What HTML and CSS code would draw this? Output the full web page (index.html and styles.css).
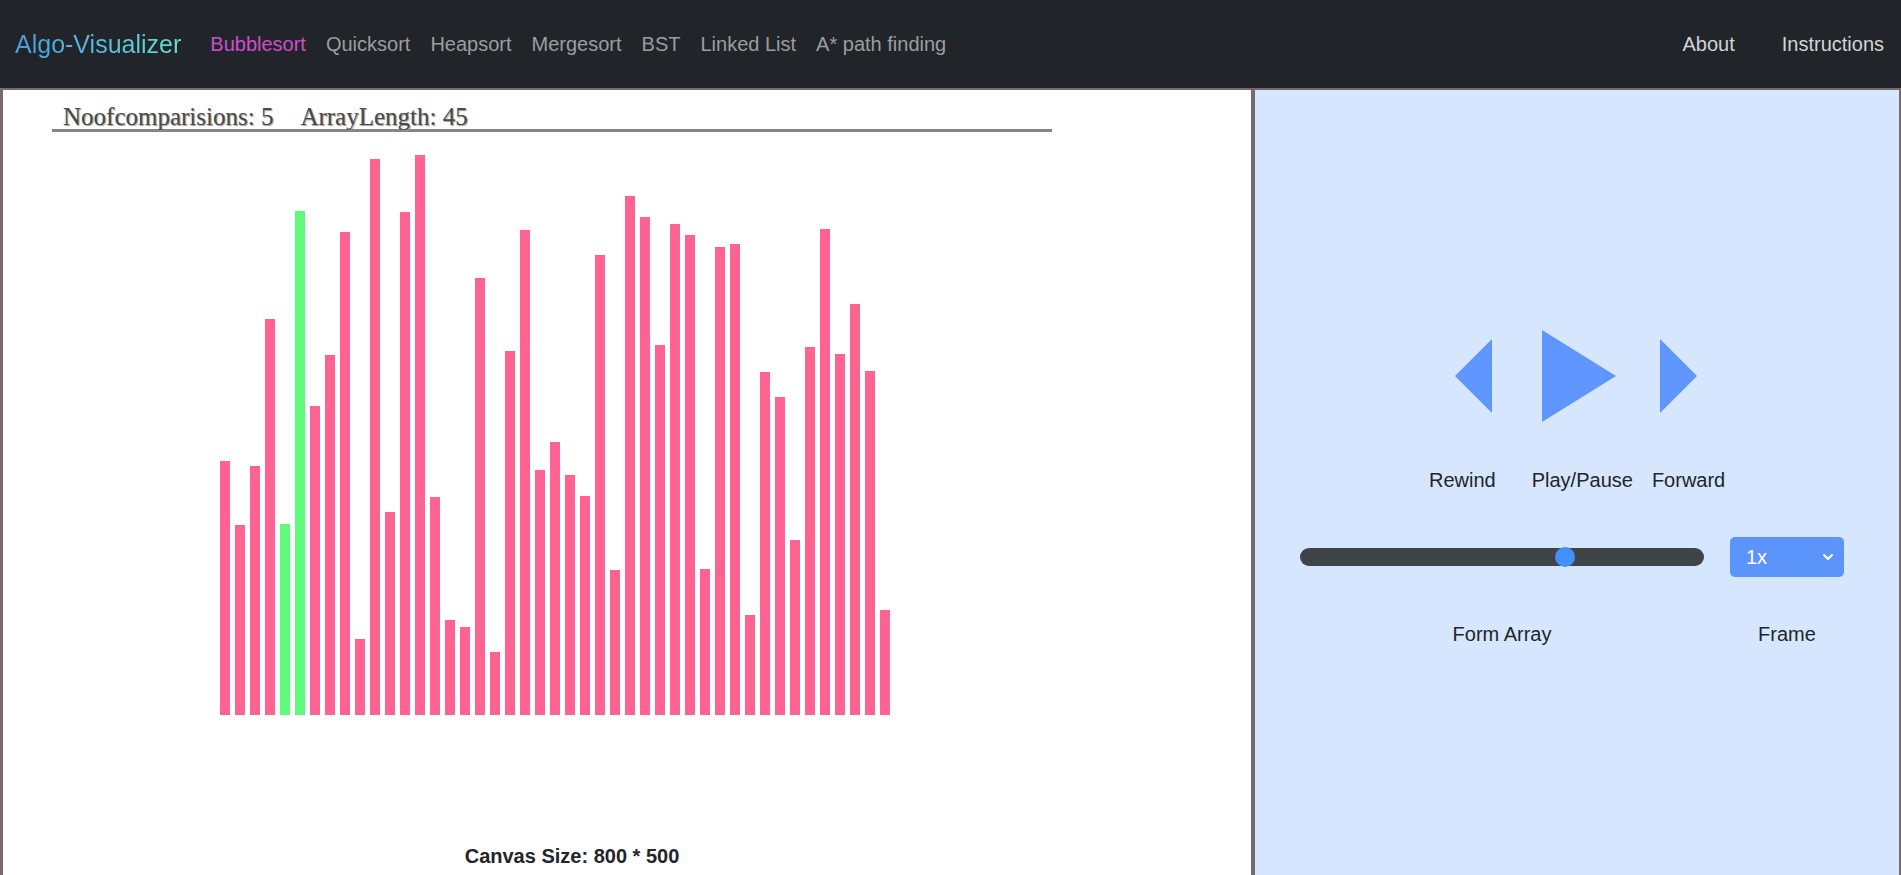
FILE: index.html
```html
<!DOCTYPE html>
<html lang="en">
<head>
<meta charset="utf-8">
<title>Algo-Visualizer</title>
<link rel="stylesheet" href="styles.css">
</head>
<body>
<nav class="navbar">
  <a class="brand" href="#">Algo-Visualizer</a>
  <ul class="nav-links">
    <li><a class="nav-link active" href="#">Bubblesort</a></li>
    <li><a class="nav-link" href="#">Quicksort</a></li>
    <li><a class="nav-link" href="#">Heapsort</a></li>
    <li><a class="nav-link" href="#">Mergesort</a></li>
    <li><a class="nav-link" href="#">BST</a></li>
    <li><a class="nav-link" href="#">Linked List</a></li>
    <li><a class="nav-link" href="#">A* path finding</a></li>
  </ul>
  <ul class="nav-right">
    <li><a class="nav-link-light" href="#">About</a></li>
    <li><a class="nav-link-light" href="#">Instructions</a></li>
  </ul>
</nav>
<main class="main">
  <section class="canvas-panel">
    <div class="stats">
      <span>Noofcomparisions: 5</span>
      <span>ArrayLength: 45</span>
    </div>
    <div class="bars">
      <div class="bar" style="height:254px"></div>
      <div class="bar" style="height:190px"></div>
      <div class="bar" style="height:249px"></div>
      <div class="bar" style="height:396px"></div>
      <div class="bar bar-active" style="height:191px"></div>
      <div class="bar bar-active" style="height:504px"></div>
      <div class="bar" style="height:309px"></div>
      <div class="bar" style="height:360px"></div>
      <div class="bar" style="height:483px"></div>
      <div class="bar" style="height:76px"></div>
      <div class="bar" style="height:556px"></div>
      <div class="bar" style="height:203px"></div>
      <div class="bar" style="height:503px"></div>
      <div class="bar" style="height:560px"></div>
      <div class="bar" style="height:218px"></div>
      <div class="bar" style="height:95px"></div>
      <div class="bar" style="height:88px"></div>
      <div class="bar" style="height:437px"></div>
      <div class="bar" style="height:63px"></div>
      <div class="bar" style="height:364px"></div>
      <div class="bar" style="height:485px"></div>
      <div class="bar" style="height:245px"></div>
      <div class="bar" style="height:273px"></div>
      <div class="bar" style="height:240px"></div>
      <div class="bar" style="height:219px"></div>
      <div class="bar" style="height:460px"></div>
      <div class="bar" style="height:145px"></div>
      <div class="bar" style="height:519px"></div>
      <div class="bar" style="height:498px"></div>
      <div class="bar" style="height:370px"></div>
      <div class="bar" style="height:491px"></div>
      <div class="bar" style="height:480px"></div>
      <div class="bar" style="height:146px"></div>
      <div class="bar" style="height:468px"></div>
      <div class="bar" style="height:471px"></div>
      <div class="bar" style="height:100px"></div>
      <div class="bar" style="height:343px"></div>
      <div class="bar" style="height:318px"></div>
      <div class="bar" style="height:175px"></div>
      <div class="bar" style="height:368px"></div>
      <div class="bar" style="height:486px"></div>
      <div class="bar" style="height:361px"></div>
      <div class="bar" style="height:411px"></div>
      <div class="bar" style="height:344px"></div>
      <div class="bar" style="height:105px"></div>
    </div>
    <div class="caption">Canvas Size: 800 * 500</div>
  </section>
  <aside class="control-panel">
    <div class="transport">
      <button class="tbtn tbtn-rewind" aria-label="Rewind">
        <svg width="37" height="74" viewBox="0 0 37 74"><polygon points="37,0 37,74 0,37" fill="#5e96fd"/></svg>
      </button>
      <button class="tbtn tbtn-play" aria-label="Play/Pause">
        <svg width="74" height="92" viewBox="0 0 74 92"><polygon points="0,0 74,46 0,92" fill="#5e96fd"/></svg>
      </button>
      <button class="tbtn tbtn-forward" aria-label="Forward">
        <svg width="37" height="74" viewBox="0 0 37 74"><polygon points="0,0 37,37 0,74" fill="#5e96fd"/></svg>
      </button>
    </div>
    <div class="transport-labels">
      <span class="lbl lbl-rewind">Rewind</span>
      <span class="lbl lbl-play">Play/Pause</span>
      <span class="lbl lbl-forward">Forward</span>
    </div>
    <div class="settings">
      <div class="track" role="slider" aria-valuemin="0" aria-valuemax="100" aria-valuenow="66">
        <span class="thumb" style="left:63.2%"></span>
      </div>
      <div class="speed">
        <span>1x</span>
        <svg width="12" height="8" viewBox="0 0 12 8"><polyline points="2,2 6,6 10,2" fill="none" stroke="#ffffff" stroke-width="2" stroke-linecap="round" stroke-linejoin="round"/></svg>
      </div>
    </div>
    <div class="settings-labels">
      <span class="lbl-form">Form Array</span>
      <span class="lbl-frame">Frame</span>
    </div>
  </aside>
</main>
</body>
</html>
```
FILE: styles.css
```css
html, body {
  margin: 0;
  padding: 0;
}
body {
  font-family: "Liberation Sans", Arial, sans-serif;
  color: #212529;
  overflow: hidden;
  height: 875px;
}
ul {
  list-style: none;
  margin: 0;
  padding: 0;
}
a {
  text-decoration: none;
}

/* navbar */
.navbar {
  height: 88px;
  background: #212529;
  display: flex;
  align-items: center;
  padding: 0 17px 0 15px;
  box-sizing: border-box;
}
.brand {
  font-size: 25px;
  line-height: 30px;
  margin-right: 19px;
  background: linear-gradient(90deg, #4a9cdb 0%, #58bfe0 55%, #6adccd 100%);
  -webkit-background-clip: text;
  background-clip: text;
  color: transparent;
}
.nav-links {
  display: flex;
}
.nav-link {
  display: block;
  font-size: 20px;
  line-height: 24px;
  padding: 0 10px;
  color: #9b9d9f;
}
.nav-link.active {
  color: #cb4fd0;
}
.nav-right {
  display: flex;
  margin-left: auto;
  gap: 47px;
}
.nav-link-light {
  font-size: 20px;
  line-height: 24px;
  color: #d3d4d5;
}

/* main */
.main {
  display: flex;
  height: 810px;
}
.canvas-panel {
  width: 1253px;
  flex: none;
  box-sizing: border-box;
  border: 2px solid #786a6b;
  border-left-width: 3px;
  background: #ffffff;
}
.stats {
  display: flex;
  gap: 27px;
  margin: 13.5px 0 0 49px;
  width: 1000px;
  box-sizing: border-box;
  padding-left: 11px;
  font-family: "Liberation Serif", "Times New Roman", serif;
  font-size: 25px;
  line-height: 25px;
  color: #4a4a4a;
  text-shadow: 1px 1px 1px #9a9a9a;
  border-bottom: 3px solid #858585;
}
.bars {
  display: flex;
  align-items: flex-end;
  gap: 5px;
  height: 560px;
  margin: 23.5px 0 0 217px;
}
.bar {
  width: 10px;
  flex: none;
  background: #ff6392;
}
.bar-active {
  background: #5ffb7d;
}
.caption {
  margin: 130px 0 0 49px;
  width: 1040px;
  text-align: center;
  font-weight: bold;
  font-size: 20px;
  line-height: 23px;
  color: #212529;
}

/* control panel */
.control-panel {
  flex: 1;
  box-sizing: border-box;
  border: 2px solid #786a6b;
  background: #d6e6fe;
}
.transport {
  display: flex;
  align-items: center;
  height: 92px;
  margin-top: 240px;
  padding-left: 200px;
}
.tbtn {
  border: 0;
  padding: 0;
  background: none;
  display: block;
  line-height: 0;
}
.tbtn svg {
  display: block;
}
.tbtn-play {
  margin-left: 50px;
}
.tbtn-forward {
  margin-left: 44px;
}
.transport-labels {
  display: flex;
  margin-top: 46.5px;
  padding-left: 174px;
  font-size: 20px;
  line-height: 23px;
}
.lbl-play {
  margin-left: 36px;
}
.lbl-forward {
  margin-left: 19px;
}
.settings {
  display: flex;
  align-items: center;
  height: 40px;
  margin-top: 45.5px;
  padding-left: 45px;
}
.track {
  position: relative;
  width: 404px;
  height: 18px;
  border-radius: 9px;
  background: #3f4449;
}
.thumb {
  position: absolute;
  top: -1px;
  width: 20px;
  height: 20px;
  border-radius: 50%;
  background: #4190fb;
}
.speed {
  width: 114px;
  height: 40px;
  margin-left: 26px;
  box-sizing: border-box;
  padding: 0 10px 0 16px;
  display: flex;
  align-items: center;
  justify-content: space-between;
  background: #5b95fc;
  border-radius: 5px;
  color: #ffffff;
  font-size: 20px;
}
.settings-labels {
  display: flex;
  margin-top: 46px;
  padding-left: 45px;
  font-size: 20px;
  line-height: 23px;
}
.lbl-form {
  width: 404px;
  text-align: center;
}
.lbl-frame {
  width: 114px;
  margin-left: 26px;
  text-align: center;
}
```
